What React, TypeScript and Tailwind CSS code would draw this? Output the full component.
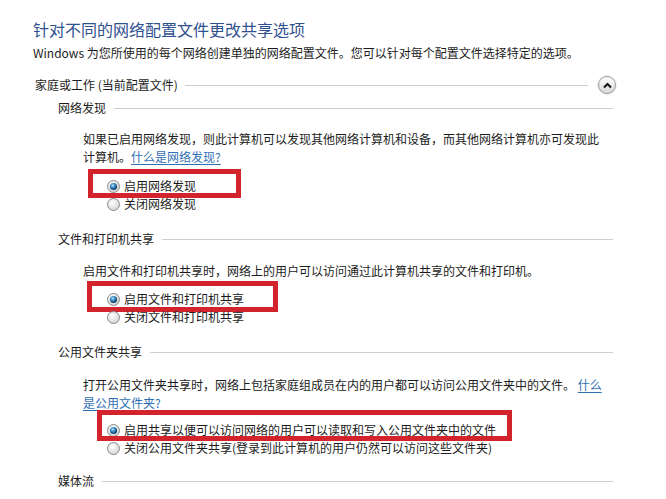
import React from 'react';

const Radio = ({ checked }: { checked?: boolean }) => (
  <svg width="13" height="13" viewBox="0 0 13 13" className="shrink-0">
    <defs>
      <radialGradient id="rOff" cx="40%" cy="35%" r="70%">
        <stop offset="0%" stopColor="#ffffff" />
        <stop offset="100%" stopColor="#d2d2d2" />
      </radialGradient>
      <radialGradient id="rOn" cx="40%" cy="35%" r="65%">
        <stop offset="0%" stopColor="#b8e4fb" />
        <stop offset="45%" stopColor="#3a8cc8" />
        <stop offset="100%" stopColor="#0f375c" />
      </radialGradient>
    </defs>
    <circle cx="6.5" cy="6.5" r="6" fill="url(#rOff)" stroke="#8a8a8a" />
    {checked && <circle cx="6.5" cy="6.5" r="3.6" fill="url(#rOn)" />}
  </svg>
);

const SectionTitle = ({ text, className }: { text: string; className?: string }) => (
  <div className={`flex h-[16px] items-center pl-[25px] pr-[2px] ${className ?? ''}`}>
    <span className="whitespace-nowrap leading-[16px]">{text}</span>
    <div className="ml-[8px] h-px flex-1 bg-[#cdcdcd]" />
  </div>
);

const Option = ({ label, checked, box }: { label: string; checked?: boolean; box?: string }) => (
  <div className="relative flex h-[18px] items-center gap-[4px] pl-[24px]">
    {box && <div className={`pointer-events-none absolute border-[5px] border-[#d3232c] ${box}`} />}
    <Radio checked={checked} />
    <span className="whitespace-nowrap leading-[18px]">{label}</span>
  </div>
);

const Link = ({ children }: { children: React.ReactNode }) => (
  <span className="text-[#2f6fb3] underline decoration-[#2f6fb3] underline-offset-2">{children}</span>
);

export default function App() {
  return (
    <div className="relative h-[499px] w-[666px] overflow-hidden bg-white font-['Noto_Sans_CJK_SC',sans-serif] text-[12px] text-[#1c1c1c]">
      <div className="ml-[33px] w-[582px] pt-[19px]">
        <div className="text-[16px] leading-[20px] text-[#2f5190]">针对不同的网络配置文件更改共享选项</div>
        <div className="mt-[6px] whitespace-nowrap leading-[16px]">
          Windows 为您所使用的每个网络创建单独的网络配置文件。您可以针对每个配置文件选择特定的选项。
        </div>

        <div className="mt-[15px] flex h-[18px] items-center pl-[2px]">
          <span className="whitespace-nowrap leading-[18px]">家庭或工作 (当前配置文件)</span>
          <div className="ml-[7px] h-px flex-1 bg-[#cdcdcd]" />
          <div className="ml-[10px] mr-[-1px] flex h-[18px] w-[18px] items-center justify-center rounded-full border border-[#9a9a9a] bg-gradient-to-b from-white to-[#d8d8d8] shadow-[0_0_0_1px_#eeeeee]">
            <svg width="9" height="7" viewBox="0 0 9 7">
              <path d="M1 5.5 L4.5 2 L8 5.5" fill="none" stroke="#151515" strokeWidth="2" />
            </svg>
          </div>
        </div>

        <SectionTitle text="网络发现" className="mt-[6px]" />
        <div className="mt-[14px] whitespace-nowrap pl-[50px] leading-[18px]">
          如果已启用网络发现，则此计算机可以发现其他网络计算机和设备，而其他网络计算机亦可发现此
          <br />
          计算机。<Link>什么是网络发现?</Link>
        </div>
        <div className="mt-[11px] pl-[50px]">
          <Option label="启用网络发现" checked box="left-[5px] top-[-8px] h-[29px] w-[153px]" />
          <Option label="关闭网络发现" />
        </div>

        <SectionTitle text="文件和打印机共享" className="mt-[18px]" />
        <div className="mt-[15px] whitespace-nowrap pl-[50px] leading-[18px]">
          启用文件和打印机共享时，网络上的用户可以访问通过此计算机共享的文件和打印机。
        </div>
        <div className="mt-[10px] pl-[50px]">
          <Option label="启用文件和打印机共享" checked box="left-[4px] top-[-9px] h-[31px] w-[191px]" />
          <Option label="关闭文件和打印机共享" />
        </div>

        <SectionTitle text="公用文件夹共享" className="mt-[18px]" />
        <div className="mt-[16px] whitespace-nowrap pl-[50px] leading-[18px]">
          打开公用文件夹共享时，网络上包括家庭组成员在内的用户都可以访问公用文件夹中的文件。 <Link>什么</Link>
          <br />
          <Link>是公用文件夹?</Link>
        </div>
        <div className="mt-[9px] pl-[50px]">
          <Option
            label="启用共享以便可以访问网络的用户可以读取和写入公用文件夹中的文件"
            checked
            box="left-[14px] top-[-11px] h-[31px] w-[415px]"
          />
          <Option label="关闭公用文件夹共享(登录到此计算机的用户仍然可以访问这些文件夹)" />
        </div>

        <SectionTitle text="媒体流" className="mt-[16px]" />
      </div>
    </div>
  );
}
